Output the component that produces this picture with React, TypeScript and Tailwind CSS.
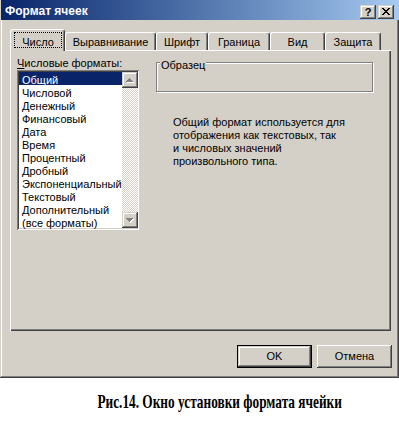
import React from 'react';

const raised =
  'shadow-[inset_-1px_-1px_#404040,inset_1px_1px_#d4d0c8,inset_-2px_-2px_#808080,inset_2px_2px_#fff]';

function Arrow({ up }: { up: boolean }) {
  const rows = up
    ? [
        [7, 6, 1],
        [6, 7, 3],
        [5, 8, 5],
        [4, 9, 7],
      ]
    : [
        [4, 6, 7],
        [5, 7, 5],
        [6, 8, 3],
        [7, 9, 1],
      ];
  return (
    <div className={`w-[16px] h-[16px] bg-[#d4d0c8] ${raised}`}>
      <svg width="16" height="16" viewBox="0 0 16 16" shapeRendering="crispEdges">
        {rows.map(([x, y, w], i) => (
          <rect key={'w' + i} x={x + 1} y={y + 1} width={w} height={1} fill="#ffffff" />
        ))}
        {rows.map(([x, y, w], i) => (
          <rect key={'g' + i} x={x} y={y} width={w} height={1} fill="#808080" />
        ))}
      </svg>
    </div>
  );
}

function CloseGlyph() {
  const r = [];
  for (let i = 0; i < 7; i++) {
    r.push(<rect key={'a' + i} x={4 + i} y={3 + i} width={2} height={1} fill="#000" />);
    r.push(<rect key={'b' + i} x={4 + 6 - i} y={3 + i} width={2} height={1} fill="#000" />);
  }
  return (
    <svg width="16" height="14" viewBox="0 0 16 14" shapeRendering="crispEdges">
      {r}
    </svg>
  );
}

const items = [
  'Общий',
  'Числовой',
  'Денежный',
  'Финансовый',
  'Дата',
  'Время',
  'Процентный',
  'Дробный',
  'Экспоненциальный',
  'Текстовый',
  'Дополнительный',
  '(все форматы)',
];

const tabBase =
  'h-[18px] border-t border-l border-white border-r border-r-[#404040] rounded-tl-[3px] rounded-tr-[3px] shadow-[inset_-1px_0_#808080] flex justify-center pt-[3px] bg-[#d4d0c8]';

export default function App() {
  return (
    <div className="w-[399px] h-[424px] bg-white flex flex-col text-[11px] leading-[13px] text-black font-['Liberation_Sans',Arial,sans-serif]">
      <div className="h-[378px] bg-[#d4d0c8] flex flex-col shadow-[inset_-1px_-1px_#404040,inset_1px_1px_#d4d0c8,inset_-2px_-2px_#808080,inset_2px_2px_#fff]">
        {/* title bar */}
        <div className="h-[20px] ml-[1px] bg-linear-to-r from-[#0a246a] to-[#a6caf0] flex items-start justify-between pl-[4px] pr-[5px]">
          <span className="pt-[4px] text-white font-bold text-[12px] leading-[14px]">Формат ячеек</span>
          <div className="flex gap-[2px] pt-[5px]">
            <div className={`w-[16px] h-[14px] bg-[#d4d0c8] ${raised} flex items-center justify-center font-bold text-[11px] leading-[14px]`}>
              ?
            </div>
            <div className={`w-[16px] h-[14px] bg-[#d4d0c8] ${raised}`}>
              <CloseGlyph />
            </div>
          </div>
        </div>

        {/* body */}
        <div className="flex-1 flex flex-col pl-[10px] pr-[7px] pt-[9px]">
          {/* tabs */}
          <div className="flex items-end h-[21px] relative z-10">
            <div className="w-[55px] h-[22px] -mb-[1px] border-t border-l border-white border-r border-r-[#404040] rounded-tl-[3px] rounded-tr-[3px] shadow-[inset_-1px_0_#808080] bg-[#d4d0c8] pt-[2px] pl-[3px] pr-[2px] pb-[3px] flex">
              <div className="flex-1 border border-dotted border-black flex justify-center pt-[3px]">Число</div>
            </div>
            <div className={`w-[91px] ${tabBase}`}>Выравнивание</div>
            <div className={`w-[52px] ${tabBase}`}>Шрифт</div>
            <div className={`w-[62px] ${tabBase}`}>Граница</div>
            <div className={`w-[55px] ${tabBase}`}>Вид</div>
            <div className={`w-[56px] ${tabBase}`}>Защита</div>
          </div>

          {/* panel */}
          <div className="w-[381px] h-[281px] border-t border-l border-white shadow-[inset_-1px_-1px_#404040,inset_-2px_-2px_#808080] pl-[6px] pt-[6px] flex items-start">
            {/* left column */}
            <div className="w-[122px] flex flex-col">
              <div className="h-[13px]">
                <span className="underline">Ч</span>исловые форматы:
              </div>
              <div className="h-[160px] bg-white p-[2px] shadow-[inset_1px_1px_#808080,inset_-1px_-1px_#fff,inset_2px_2px_#404040,inset_-2px_-2px_#d4d0c8] flex">
                <div className="flex-1 flex flex-col">
                  {items.map((it, i) => (
                    <div
                      key={it}
                      className={
                        i === 0
                          ? 'h-[13px] leading-[16px] pl-[3px] bg-[#0a246a] text-white whitespace-nowrap'
                          : 'h-[13px] leading-[16px] pl-[3px] whitespace-nowrap'
                      }
                    >
                      {it}
                    </div>
                  ))}
                </div>
                <div className="w-[16px] flex flex-col">
                  <Arrow up />
                  <div className="flex-1 bg-[repeating-conic-gradient(#d4d0c8_0_25%,#ffffff_0_50%)] bg-[length:2px_2px]" />
                  <Arrow up={false} />
                </div>
              </div>
            </div>

            {/* right column */}
            <div className="ml-[17px] mt-[5px] flex flex-col">
              <div className="relative w-[217px] h-[30px] border border-[#808080] shadow-[inset_1px_1px_#fff,1px_1px_#fff]">
                <span className="absolute -top-[4px] left-[3px] px-[1px] bg-[#d4d0c8]">Образец</span>
              </div>
              <div className="mt-[24px] pl-[17px] leading-[13px]">
                <div>Общий формат используется для</div>
                <div>отображения как текстовых, так</div>
                <div>и числовых значений</div>
                <div>произвольного типа.</div>
              </div>
            </div>
          </div>

          {/* buttons */}
          <div className="mt-[14px] flex justify-end gap-[5px]">
            <div className="w-[75px] h-[23px] border border-black">
              <div className={`w-full h-full bg-[#d4d0c8] ${raised} flex items-center justify-center`}>OK</div>
            </div>
            <div className={`w-[75px] h-[23px] bg-[#d4d0c8] shadow-[inset_-1px_-1px_#404040,inset_1px_1px_#fff,inset_-2px_-2px_#808080,inset_2px_2px_#d4d0c8] flex items-center justify-center`}>
              Отмена
            </div>
          </div>
        </div>
      </div>

      {/* caption */}
      <div className="flex-1 flex items-center justify-center pl-[41px]">
        <span className="inline-block font-['Liberation_Serif','Times_New_Roman',serif] font-bold text-[19px] leading-[22px] scale-x-[0.7] whitespace-nowrap pt-[1px]">
          Рис.14. Окно установки формата ячейки
        </span>
      </div>
    </div>
  );
}
